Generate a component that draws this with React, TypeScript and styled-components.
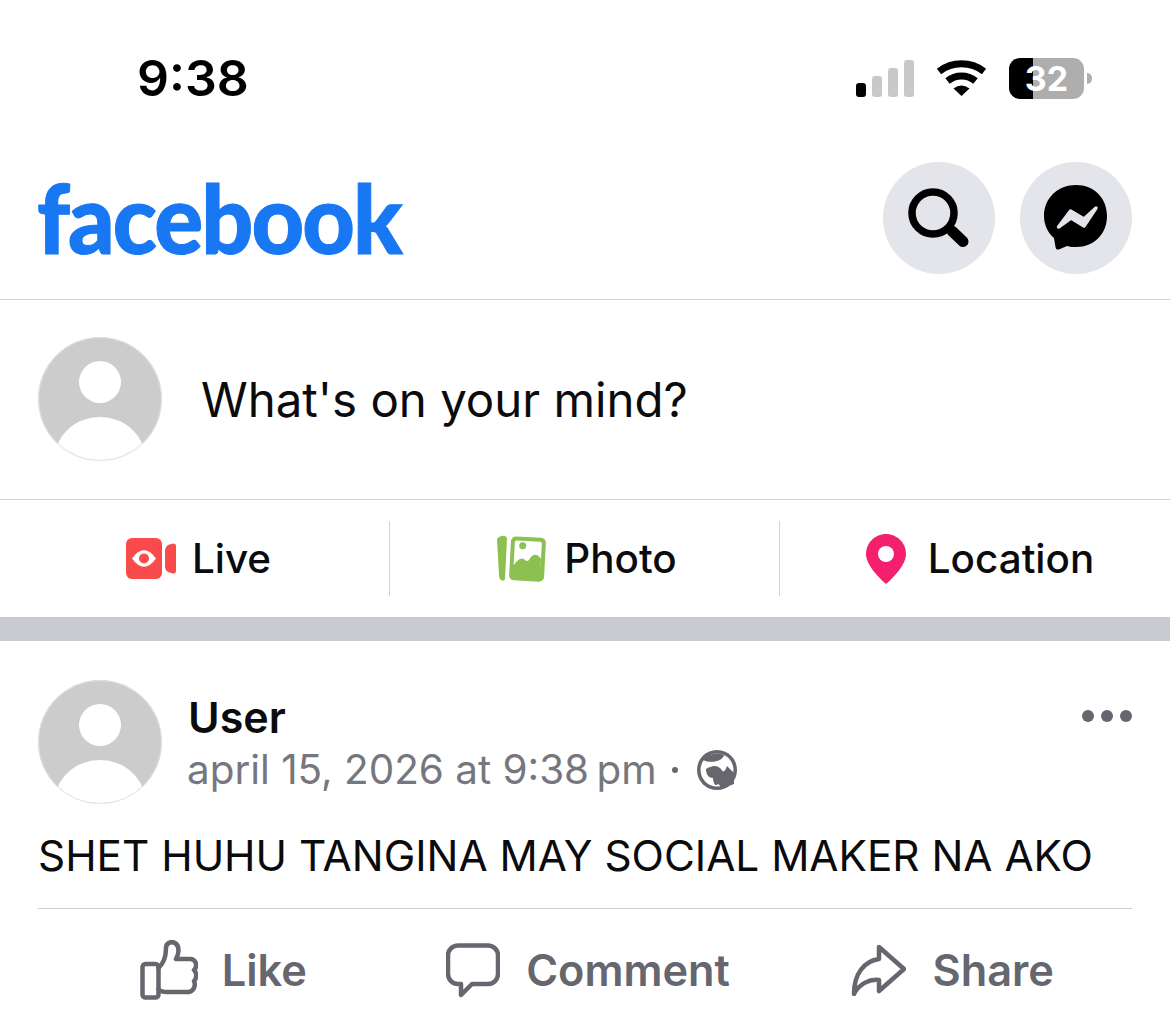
import React from "react";
import styled, { createGlobalStyle } from "styled-components";

const GlobalStyle = createGlobalStyle`
  html, body {
    margin: 0;
    padding: 0;
    background: #fff;
  }
  * {
    box-sizing: border-box;
  }
  body {
    font-family: "Inter", "Liberation Sans", sans-serif;
    color: #0b0b0d;
  }
`;

const Page = styled.div`
  width: 1170px;
  height: 1031px;
  overflow: hidden;
  display: flex;
  flex-direction: column;
`;

const StatusBar = styled.div`
  height: 135px;
  padding: 55px 86px 0 137px;
  display: flex;
  justify-content: space-between;
  align-items: flex-start;
`;

const Time = styled.div`
  font-size: 50px;
  line-height: 46px;
  font-weight: 600;
  color: #000;
`;

const StatusIcons = styled.div`
  display: flex;
  align-items: center;
  margin-top: 1px;
`;

const Signal = styled.div`
  display: flex;
  align-items: flex-end;
  gap: 6px;
  height: 38px;
  margin-right: 22px;
`;

const SignalBar = styled.span<{ $h: number; $on?: boolean }>`
  width: 10px;
  height: ${(p) => p.$h}px;
  border-radius: 3px;
  background: ${(p) => (p.$on ? "#000" : "#c8c8c8")};
`;

const Battery = styled.div`
  width: 75px;
  height: 41px;
  margin-left: 22px;
  margin-top: 2px;
  border-radius: 11px;
  background: linear-gradient(to right, #000 24px, #aeaeae 24px);
  color: #fff;
  font-size: 34px;
  font-weight: 700;
  line-height: 41px;
  text-align: center;
  position: relative;
  &::after {
    content: "";
    position: absolute;
    left: 78px;
    top: 15px;
    width: 5px;
    height: 11px;
    border-radius: 0 6px 6px 0;
    background: #aeaeae;
  }
`;

const Header = styled.header`
  height: 165px;
  padding: 0 38px;
  display: flex;
  align-items: center;
  justify-content: space-between;
  border-bottom: 1px solid #d2d2d5;
`;

const Logo = styled.div`
  font-family: "Lato", sans-serif;
  font-weight: 900;
  font-size: 96px;
  line-height: 100px;
  letter-spacing: -2px;
  color: #1877f2;
  -webkit-text-stroke: 1px #1877f2;
  margin-left: -1px;
  transform: scaleX(0.95);
  transform-origin: left center;
`;

const HeaderButtons = styled.div`
  display: flex;
  gap: 25px;
  margin-top: 2px;
`;

const RoundButton = styled.div`
  width: 112px;
  height: 112px;
  border-radius: 50%;
  background: #e4e5ea;
  display: flex;
  align-items: center;
  justify-content: center;
`;

const Composer = styled.div`
  height: 200px;
  padding: 0 38px 1px;
  display: flex;
  align-items: center;
  gap: 39px;
  border-bottom: 1px solid #d2d2d5;
`;

const ComposerText = styled.div`
  font-size: 47.4px;
  color: #0b0b0d;
`;

const AvatarCircle = styled.svg`
  width: 124px;
  height: 124px;
  flex: none;
`;

const ActionBar = styled.div`
  height: 117px;
  padding-top: 21px;
  display: grid;
  grid-template-columns: 390px 390px 390px;
  align-items: start;
`;

const ActionCell = styled.div<{ $divider?: boolean; $gap?: number; $shift?: number }>`
  height: 75px;
  display: flex;
  align-items: center;
  justify-content: center;
  gap: ${(p) => p.$gap ?? 17}px;
  padding-left: ${(p) => p.$shift ?? 5}px;
  font-size: 40.4px;
  font-weight: 500;
  color: #0b0b0d;
  border-right: ${(p) => (p.$divider ? "1px solid #d2d2d5" : "none")};
`;

const GreyBand = styled.div`
  height: 24px;
  background: #c9cad0;
`;

const Post = styled.article`
  padding: 39px 38px 0;
  display: flex;
  flex-direction: column;
`;

const PostHead = styled.div`
  display: flex;
  gap: 26px;
`;

const PostMeta = styled.div`
  flex: 1;
  display: flex;
  flex-direction: column;
  padding-top: 13px;
`;

const UserName = styled.div`
  font-size: 43px;
  line-height: 48px;
  font-weight: 600;
  color: #0b0b0d;
`;

const DateRow = styled.div`
  margin-top: 5px;
  margin-left: -1px;
  display: flex;
  align-items: center;
  font-size: 40.4px;
  line-height: 48px;
  color: #76777e;
`;

const Separator = styled.span`
  width: 6px;
  height: 6px;
  border-radius: 50%;
  background: #65666e;
  margin: 0 19px 0 15px;
`;

const MoreDots = styled.div`
  display: flex;
  gap: 7px;
  margin-top: 30px;
  height: 12px;
`;

const Dot = styled.span`
  width: 12px;
  height: 12px;
  border-radius: 50%;
  background: #65666e;
`;

const PostText = styled.div`
  margin-top: 24px;
  font-size: 42.3px;
  line-height: 56px;
  color: #0b0b0d;
  white-space: nowrap;
`;

const PostActions = styled.div`
  margin-top: 24px;
  height: 100px;
  padding-top: 30px;
  border-top: 1px solid #cfcfd2;
  display: grid;
  grid-template-columns: repeat(3, 1fr);
  align-items: start;
`;

const PostAction = styled.div<{ $gap?: number }>`
  display: flex;
  align-items: center;
  justify-content: center;
  gap: ${(p) => p.$gap ?? 26}px;
  height: 62px;
  padding-left: 6px;
  font-size: 43.3px;
  font-weight: 600;
  color: #65666e;
`;

const Avatar = () => (
  <AvatarCircle viewBox="0 0 124 124">
    <defs>
      <clipPath id="avatar-clip">
        <circle cx="62" cy="62" r="62" />
      </clipPath>
    </defs>
    <circle cx="62" cy="62" r="62" fill="#cccccc" />
    <circle cx="62" cy="45" r="21" fill="#fff" />
    <g clipPath="url(#avatar-clip)">
      <ellipse cx="62" cy="124" rx="46" ry="44" fill="#fff" />
    </g>
    <circle cx="62" cy="62" r="61.500" fill="none" stroke="#e2e2e2" strokeWidth="1" />
  </AvatarCircle>
);

const WifiIcon = () => (
  <svg width="51" height="38" viewBox="0 0 51 38">
    <path d="M3 12.500A37 37 0 0 1 48 12.500" fill="none" stroke="#000" strokeWidth="7" />
    <path d="M11.500 22A22 22 0 0 1 39.500 22" fill="none" stroke="#000" strokeWidth="7" />
    <path d="M25.500 37L17.500 29.500Q25.500 23.500 33.500 29.500Z" fill="#000" />
  </svg>
);

const SearchIcon = () => (
  <svg width="62" height="60" viewBox="0 0 62 60">
    <circle cx="25" cy="25" r="21" fill="none" stroke="#000" strokeWidth="7.500" />
    <path d="M44 43L55 53.500" fill="none" stroke="#000" strokeWidth="11" strokeLinecap="round" />
  </svg>
);

const MessengerIcon = () => (
  <svg width="66" height="68" viewBox="0 0 66 68">
    <path
      d="M33 1C15 1 1 14 1 32C1 41 5 49 11 54L12.500 63C13 66 15 66 17 65L24 62C27 63 30 63 33 63C51 63 64 50 64 32C64 14 51 1 33 1Z"
      fill="#000"
    />
    <path d="M15.500 43L27.500 27L41 35L53 24L41 42L28 34Z" fill="#e4e5ea" stroke="#e4e5ea" strokeWidth="3.500" strokeLinejoin="round" />
  </svg>
);

const LiveIcon = () => (
  <svg width="50" height="41" viewBox="0 0 50 41">
    <rect x="0" y="0" width="36" height="41" rx="6" fill="#f94b4b" />
    <path d="M39 12Q39 9 42 7L47 5.500Q50 5 50 8V33Q50 36 47 35.500L42 34Q39 32 39 29Z" fill="#f94b4b" />
    <path d="M6 20.500Q18 4 30 20.500Q18 37 6 20.500Z" fill="#fff" />
    <circle cx="18" cy="20.500" r="5" fill="#f94b4b" />
  </svg>
);

const PhotoIcon = () => (
  <svg width="50" height="48" viewBox="0 0 50 48">
    <path d="M2 2Q8 -1 10 3L8 44Q7 47 4 45Q2 44 2 40L0 5Q0 3 2 2Z" fill="#8cc152" />
    <g transform="rotate(3 30 24)">
      <rect x="13" y="2" width="35" height="44" rx="5" fill="#8cc152" />
      <rect x="17" y="6" width="27" height="26" rx="2" fill="#fff" />
      <circle cx="25" cy="11" r="3.500" fill="#8cc152" />
      <path d="M17 31Q23 21 28 25Q30 27 32 25Q37 15 44 23V40H17Z" fill="#8cc152" />
    </g>
  </svg>
);

const PinIcon = () => (
  <svg width="40" height="50" viewBox="0 0 40 50">
    <path d="M20 0C31 0 40 9 40 20C40 31 27 44 20 50C13 44 0 31 0 20C0 9 9 0 20 0Z" fill="#f41f6d" />
    <circle cx="20" cy="20" r="8" fill="#fff" />
  </svg>
);

const GlobeIcon = () => (
  <svg width="40" height="40" viewBox="0 0 40 40">
    <circle cx="20" cy="20" r="20" fill="#65666e" />
    <circle cx="20" cy="20" r="16.500" fill="#fff" />
    <path d="M6 10C11 3 22 2 27 5C26 11 14 14 6 10Z" fill="#65666e" />
    <path
      d="M9 19C14 16 20 14 24 19C26 23 28 22 30 16L37 23L37 34L24 39C23 36 23 35 21 34C18 37 16.500 33 16 28C12 28 9 25 9 19Z"
      fill="#65666e"
    />
  </svg>
);

const LikeIcon = () => (
  <svg width="58" height="60" viewBox="0 0 58 60">
    <g fill="none" stroke="#65666e" strokeWidth="4.500" strokeLinejoin="round" strokeLinecap="round">
      <rect x="2.500" y="24" width="16" height="33.500" rx="3" />
      <path d="M18.500 28C25 22 26 15 26 8C26 3 31 1 35 3C40 6 39 14 36 19H50C56 19 58 26 54 30C57 33 57 38 54 41C56 45 54 51 49 52H27C23 52 20 51 18.500 49" />
    </g>
  </svg>
);

const CommentIcon = () => (
  <svg width="54" height="55" viewBox="0 0 54 55">
    <path
      d="M12 2.500H42A10 10 0 0 1 52 12.500V31A10 10 0 0 1 42 41H26L15 52V41H12A10 10 0 0 1 2 31V12.500A10 10 0 0 1 12 2.500Z"
      fill="none"
      stroke="#65666e"
      strokeWidth="4.500"
      strokeLinejoin="round"
    />
  </svg>
);

const ShareIcon = () => (
  <svg width="55" height="52" viewBox="0 0 55 52">
    <path
      d="M28 3L53 25L28 47V36C18 35 8 40 3 50C3 30 13 17 28 15Z"
      fill="none"
      stroke="#65666e"
      strokeWidth="4.500"
      strokeLinejoin="round"
    />
  </svg>
);

const App: React.FC = () => {
  return (
    <Page>
      <GlobalStyle />
      <StatusBar>
        <Time>9:38</Time>
        <StatusIcons>
          <Signal>
            <SignalBar $h={14} $on />
            <SignalBar $h={21} />
            <SignalBar $h={29} />
            <SignalBar $h={37} />
          </Signal>
          <WifiIcon />
          <Battery>32</Battery>
        </StatusIcons>
      </StatusBar>

      <Header>
        <Logo>facebook</Logo>
        <HeaderButtons>
          <RoundButton>
            <SearchIcon />
          </RoundButton>
          <RoundButton>
            <MessengerIcon />
          </RoundButton>
        </HeaderButtons>
      </Header>

      <Composer>
        <Avatar />
        <ComposerText>What's on your mind?</ComposerText>
      </Composer>

      <ActionBar>
        <ActionCell $divider $gap={16} $shift={8}>
          <LiveIcon />
          Live
        </ActionCell>
        <ActionCell $divider>
          <PhotoIcon />
          Photo
        </ActionCell>
        <ActionCell $gap={22} $shift={10}>
          <PinIcon />
          Location
        </ActionCell>
      </ActionBar>

      <GreyBand />

      <Post>
        <PostHead>
          <Avatar />
          <PostMeta>
            <UserName>User</UserName>
            <DateRow>
              april 15, 2026 at 9:38{"\u2009"}pm
              <Separator />
              <GlobeIcon />
            </DateRow>
          </PostMeta>
          <MoreDots>
            <Dot />
            <Dot />
            <Dot />
          </MoreDots>
        </PostHead>
        <PostText>SHET HUHU TANGINA MAY SOCIAL MAKER NA AKO</PostText>
        <PostActions>
          <PostAction $gap={24}>
            <LikeIcon />
            Like
          </PostAction>
          <PostAction>
            <CommentIcon />
            Comment
          </PostAction>
          <PostAction>
            <ShareIcon />
            Share
          </PostAction>
        </PostActions>
      </Post>
    </Page>
  );
};

export default App;
